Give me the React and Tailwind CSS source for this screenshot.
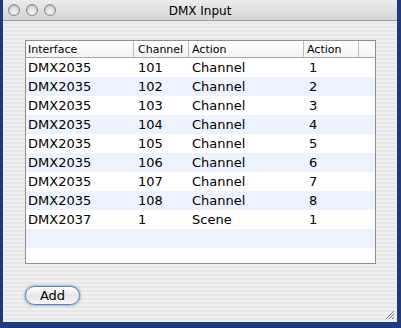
const rows = [
  ["DMX2035", "101", "Channel", "1"],
  ["DMX2035", "102", "Channel", "2"],
  ["DMX2035", "103", "Channel", "3"],
  ["DMX2035", "104", "Channel", "4"],
  ["DMX2035", "105", "Channel", "5"],
  ["DMX2035", "106", "Channel", "6"],
  ["DMX2035", "107", "Channel", "7"],
  ["DMX2035", "108", "Channel", "8"],
  ["DMX2037", "1", "Scene", "1"],
  ["", "", "", ""],
];

const cols = "grid grid-cols-[108px_55px_115px_55px_1fr]";

function Light() {
  return (
    <div className="w-[12px] h-[12px] rounded-full border border-[#8a8a8a] bg-[radial-gradient(circle_at_50%_70%,#f4f4f4,#c9c9c9)] shadow-[inset_0_1px_1px_rgba(0,0,0,0.15)]" />
  );
}

export default function App() {
  return (
    <div className="w-[401px] h-[328px] bg-[#1d3b78] pl-[3px] pr-[4px] pb-[6px] flex font-['DejaVu_Sans',sans-serif] text-black">
      <div className="flex-1 flex flex-col bg-[repeating-linear-gradient(180deg,#efefef_0px,#efefef_2px,#e7e7e7_2px,#e7e7e7_4px)]">
        {/* title bar */}
        <div className="h-[21px] flex items-center relative border-b border-[#9a9a9a] bg-[linear-gradient(180deg,#ececec,#d3d3d3)]">
          <div className="flex gap-[6px] pl-[5px]">
            <Light />
            <Light />
            <Light />
          </div>
          <div className="absolute inset-0 flex items-center justify-center text-[12px] leading-none pt-[1px]">
            DMX Input
          </div>
        </div>

        {/* body */}
        <div className="flex-1 flex flex-col pt-[19px] px-[22px] pr-[21px]">
          <div className="h-[224px] border border-[#8e8e8e] bg-white flex flex-col">
            <div className={`${cols} h-[17px] border-b border-[#a8a8a8] text-[11px] leading-none bg-[linear-gradient(180deg,#ffffff,#f3f3f3)]`}>
              <div className="flex items-center pl-[2px] border-r border-[#bdbdbd]">Interface</div>
              <div className="flex items-center pl-[4px] border-r border-[#bdbdbd]">Channel</div>
              <div className="flex items-center pl-[3px] border-r border-[#bdbdbd]">Action</div>
              <div className="flex items-center pl-[3px] border-r border-[#bdbdbd]">Action</div>
              <div />
            </div>
            {rows.map((r, i) => (
              <div
                key={i}
                className={`${cols} h-[19px] text-[13px] leading-none ${i % 2 ? "bg-[#edf3fe]" : "bg-white"}`}
              >
                <div className="flex items-center pl-[2px]">{r[0]}</div>
                <div className="flex items-center pl-[4px]">{r[1]}</div>
                <div className="flex items-center pl-[3px]">{r[2]}</div>
                <div className="flex items-center pl-[5px]">{r[3]}</div>
                <div />
              </div>
            ))}
          </div>

          <div className="flex items-end justify-between mt-[22px]">
            <button className="w-[55px] h-[19px] rounded-full border border-[#5b84b8] shadow-[0_0_2px_1px_rgba(90,140,200,0.6)] bg-[linear-gradient(180deg,#ffffff,#e6e6e6_50%,#f6f6f6)] text-[13px] leading-none flex items-center justify-center">
              Add
            </button>
          </div>
        </div>
        <div className="flex justify-end pr-[2px] pb-[2px]">
          <svg width="11" height="11" viewBox="0 0 11 11">
            <path d="M10 2 L2 10 M10 5 L5 10 M10 8 L8 10" stroke="#7a7a7a" strokeWidth="1" />
          </svg>
        </div>
      </div>
    </div>
  );
}
